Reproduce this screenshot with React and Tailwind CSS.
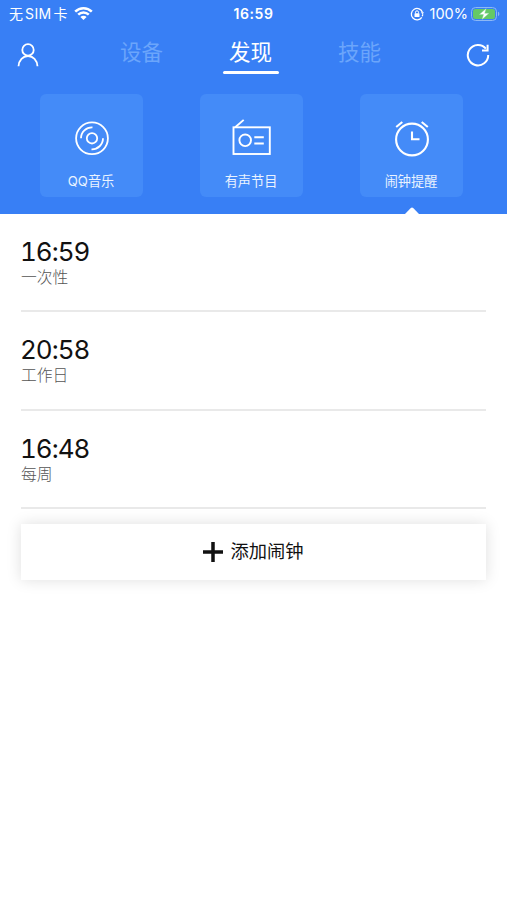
const tabs = [
    { name: "设备", left: "ml-[120px]" },
    { name: "发现", active: true, left: "ml-[66px]" },
    { name: "技能", left: "ml-[66px]" },
];

const alarms = [
    { time: "16:59", repeat: "一次性" },
    { time: "20:58", repeat: "工作日" },
    { time: "16:48", repeat: "每周" },
];

const StatusBar = () => {
    return (
        <div className="grid h-7 grid-cols-3 items-center text-white">
            <div className="flex items-center pl-[9px]">
                <span className="flex w-[60px] items-center gap-[2px] text-[14px] leading-7 whitespace-nowrap">
                    <span>无</span>
                    <span className="tracking-[0.4px]">SIM</span>
                    <span>卡</span>
                </span>
                <svg className="ml-[5px] h-[15px] w-[19px] -mt-px" viewBox="0 0 19 15" fill="none" stroke="currentColor" strokeWidth="2.5">
                    <path d="M1.2 5.6C5.8 1 13.2 1 17.8 5.6" />
                    <path d="M4.200 8.700c3-2.900 7.600-2.900 10.600 0" />
                    <path d="M9.500 14 6.400 10.900c1.600-1.600 4.600-1.600 6.200 0z" fill="currentColor" stroke="none" />
                </svg>
            </div>
            <span className="-mt-px text-center text-[14px] font-semibold tracking-[0.55px]">16:59</span>
            <div className="flex items-center justify-end pr-[7px]">
                <svg className="h-[14px] w-[14px]" viewBox="0 0 14 14" fill="none" stroke="currentColor" strokeWidth="1.300">
                    <path d="M11.800 10.300A5.700 5.700 0 1 1 12.500 5.500" />
                    <path d="M12.700 7.300a5.700 5.700 0 0 1-.5 2" />
                    <path d="m10.800 5.600 1.900 1.700L14 5.300z" fill="currentColor" stroke="none" />
                    <rect x="4.500" y="6.300" width="5" height="3.700" rx=".6" fill="currentColor" stroke="none" />
                    <path d="M5.500 6.500V5.300a1.500 1.500 0 0 1 3 0v1.200" strokeWidth="1" />
                </svg>
                <span className="ml-[6px] text-[14.5px]">100%</span>
                <svg className="ml-[3px] h-[14px] w-[29px]" viewBox="0 0 29 14">
                    <rect x=".5" y=".5" width="25" height="13" rx="4" fill="none" stroke="#8db8f5" />
                    <rect x="2" y="2" width="22" height="10" rx="2.500" fill="#65c966" />
                    <path d="M27 4.800c1.800.5 1.800 3.900 0 4.400z" fill="#8db8f5" />
                    <path d="M15.200 1.500 8.300 7.600h4.200L11 12.500l7-6.200h-4.300z" fill="#fff" stroke="#8ed5a0" strokeWidth=".4" />
                </svg>
            </div>
        </div>
    );
};

const NavBar = () => {
    return (
        <nav className="relative flex h-[66px] pt-[9px]">
            <svg className="absolute top-[15px] left-[17px] h-6 w-[22px] text-white" viewBox="0 0 22 24" fill="none" stroke="currentColor" strokeWidth="1.800">
                <circle cx="11" cy="6.900" r="5.700" />
                <path d="M1.500 23.300c.3-6.300 4.500-10.300 9.500-10.300s9.200 4 9.500 10.300" />
            </svg>
            {tabs.map((tab) => (
                <div
                    key={tab.name}
                    className={`flex w-[43px] flex-col items-center text-[21.5px] leading-[30px] whitespace-nowrap ${tab.left} ${tab.active ? "text-white" : "text-[#6ba5fb]"}`}
                >
                    <span>{tab.name}</span>
                    {tab.active ? <span className="mt-[3.5px] h-[3px] w-[56px] rounded-full bg-white"></span> : ""}
                </div>
            ))}
            <svg className="absolute top-[15px] right-[17px] h-6 w-6 text-white" viewBox="0 0 24 24" fill="none" stroke="currentColor" strokeWidth="2">
                <path d="M19.900 5.700A10.200 10.200 0 1 0 22.200 12" />
                <path d="M21.600 1.800V7.500H16" />
            </svg>
        </nav>
    );
};

const DiscIcon = () => (
    <svg className="h-10 w-10" viewBox="0 0 40 40" fill="none" stroke="currentColor" strokeWidth="1.800">
        <circle cx="20" cy="20.300" r="15.900" />
        <circle cx="20" cy="20.300" r="5.200" />
        <path d="M9 20.300A11 11 0 0 1 20.500 9.300" />
        <path d="M31 20.300A11 11 0 0 1 19.500 31.300" />
    </svg>
);

const RadioIcon = () => (
    <svg className="h-10 w-10" viewBox="0 0 40 40" fill="none" stroke="currentColor" strokeWidth="1.900">
        <rect x="1.500" y="9.300" width="36.300" height="26.700" />
        <path d="M3.200 9.300 11.700 1.900" />
        <circle cx="13.200" cy="22.300" r="5.800" />
        <path d="M22.300 19.300h9.500M22.300 25.500h9.500" />
    </svg>
);

const AlarmIcon = () => (
    <svg className="h-10 w-10" viewBox="0 0 40 40" fill="none" stroke="currentColor" strokeWidth="2.100">
        <circle cx="20" cy="21.500" r="15.900" />
        <path d="M20 13.500v7.700h7.500" />
        <path d="M4.200 9 10.300 4M35.800 9l-6.100-5" />
    </svg>
);

const Card = ({ icon, label, selected }) => {
    return (
        <div className="relative flex h-[103px] w-[103px] flex-col items-center rounded-md bg-[#448bf8] pt-6 text-white">
            {icon}
            <span className="mt-[13px] -ml-px text-[13.2px] leading-5 whitespace-nowrap text-[#eaf3ff]">{label}</span>
            {selected ? (
                <svg className="absolute top-[113px] left-[45px] h-[7px] w-[14px]" viewBox="0 0 14 7">
                    <path d="M0 7 5.800.9q1.200-1 2.400 0L14 7z" fill="#fff" />
                </svg>
            ) : ("")}
        </div>
    );
};

const App = () => {
    return (
        <div className="min-h-screen bg-white font-['Inter','Noto_Sans_CJK_SC',sans-serif]">
            <header className="h-[214px] bg-[#387ff5]">
                <StatusBar />
                <NavBar />
                <div className="flex gap-[57px] pl-10">
                    <Card icon={<DiscIcon />} label="QQ音乐" />
                    <Card icon={<RadioIcon />} label="有声节目" />
                    <Card icon={<AlarmIcon />} label="闹钟提醒" selected />
                </div>
            </header>
            <main className="px-[21px]">
                <ul>
                    {alarms.map((alarm) => (
                        <li key={alarm.time} className="h-[98.4px] border-b-2 border-[#e9e9e9] pt-[22px]">
                            <p className="-ml-px text-[26px] leading-8 tracking-[-1px] text-[#111] tabular-nums">{alarm.time}</p>
                            <p className="text-[15.8px] leading-5 font-light text-[#555]">{alarm.repeat}</p>
                        </li>
                    ))}
                </ul>
                <button className="mt-[14.8px] flex h-14 w-full items-center justify-center gap-[7px] bg-white text-[18.3px] text-[#111] shadow-[0_0_14px_rgba(0,0,0,0.13)]">
                    <svg className="h-5 w-5" viewBox="0 0 20 20" stroke="currentColor" strokeWidth="3.500">
                        <path d="M10 0v20M0 10h20" />
                    </svg>
                    <span>添加闹钟</span>
                </button>
            </main>
        </div>
    );
};

export default App;
